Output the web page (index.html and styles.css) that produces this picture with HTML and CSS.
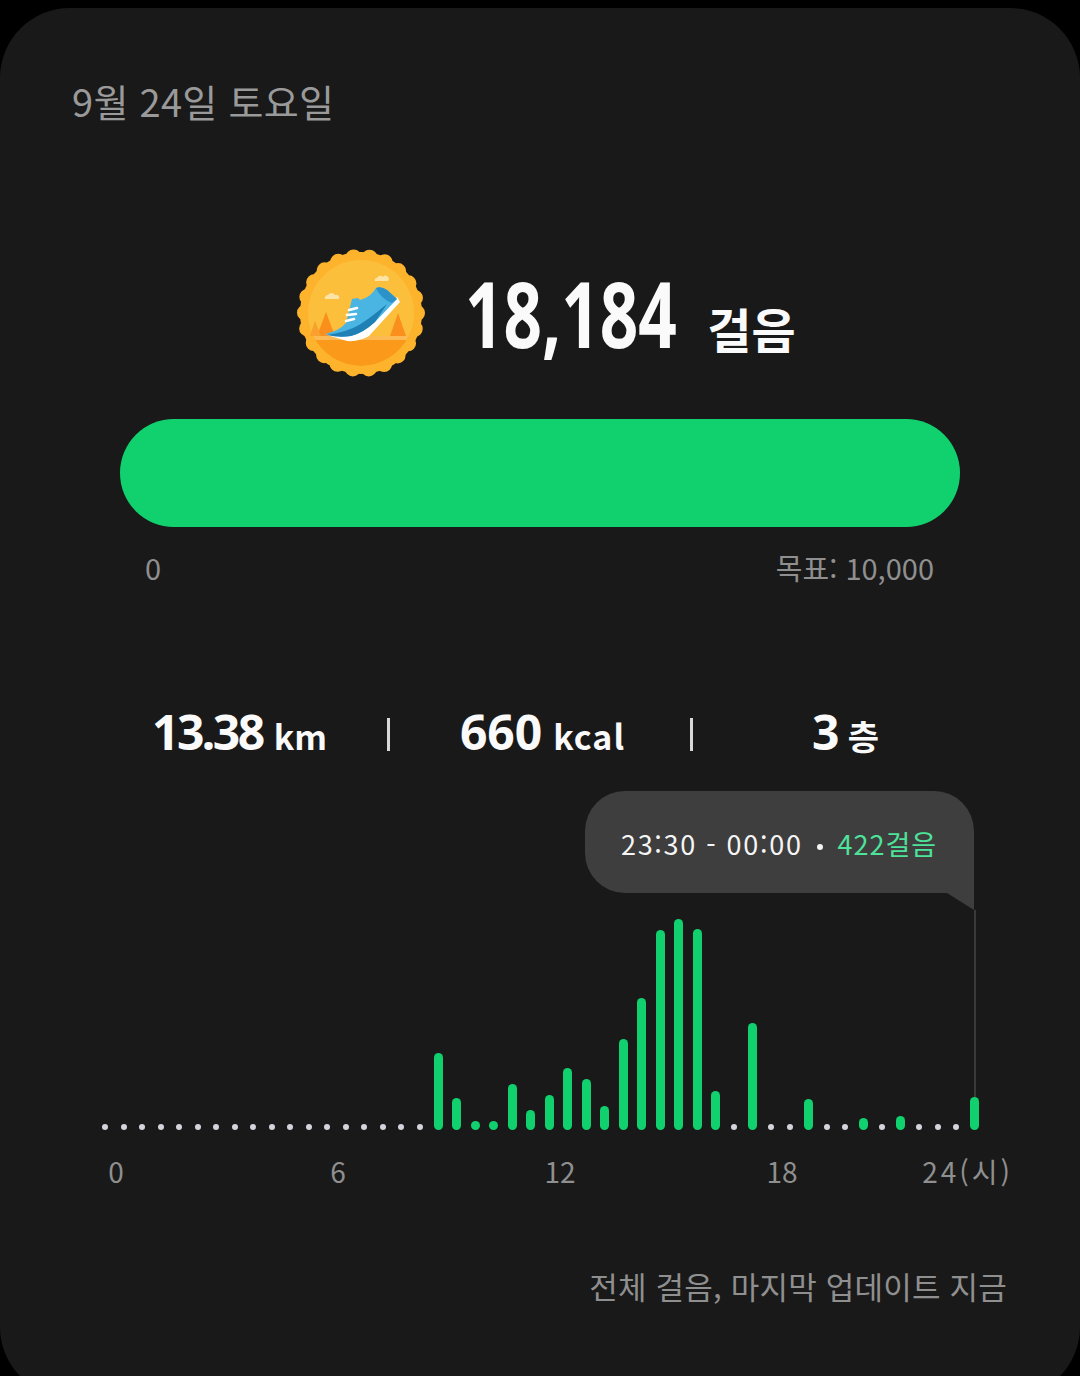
FILE: index.html
```html
<!DOCTYPE html>
<html lang="ko">
    <head>
        <meta charset="UTF-8">
        <meta name="viewport" content="width=device-width, initial-scale=1.0">
        <title>걸음</title>

        <link rel="stylesheet" href="styles.css">
    </head>
    <body>
        <div class="card">

            <div class="date">9월 24일 토요일</div>

            <div class="hero">
                <svg class="badge" viewBox="0 0 128 128">
                    <circle cx="64" cy="64" r="61" fill="#feb32c"/>
                    <circle cx="64" cy="64" r="56" fill="none" stroke="#feb32c" stroke-width="16" stroke-linecap="round" stroke-dasharray="0 16.0"/>
                    <circle cx="64" cy="64" r="53" fill="#fbbf3b"/>
                    <path d="M16.3 87 H111.700 A53 53 0 0 1 16.300 87 Z" fill="#fb9a1a"/>
                    <path d="M16.3 87 H111.700 L109.600 91 H18.400 Z" fill="#fdba52"/>
                    <path d="M29 63 L38 87 H20 Z" fill="#fb8f1e"/>
                    <path d="M18 72 L24 87 H13 Z" fill="#f9a02e"/>
                    <path d="M101 64 L109 87 H93 Z" fill="#fb8f1e"/>
                    <path d="M28 50 a3 3 0 0 1 3 -4 a4 4 0 0 1 7 0 a3 3 0 0 1 4 4 Z" fill="#fde4a6"/>
                    <path d="M78 32 a2 2 0 0 1 2 -3 a3.500 3.500 0 0 1 6 -1 a3 3 0 0 1 5 4 Z" fill="#fde4a6"/>
                    <path d="M27 85 L50 92 Q62 93 72 87 L103 53 L100 48 L66 80 L32 86 Z" fill="#fff"/>
                    <path d="M28 85 Q42 82 49 74 L55 50 L61 49 L63 51 Q74 48 79 39 Q84 37 90 41 L100 50 L78 73 Q66 84 54 87 Q40 89 28 85 Z" fill="#4ab4e2"/>
                    <path d="M79 39 Q84 37 90 41 L100 50 L95 54 Q84 50 79 39 Z" fill="#2c93c9"/>
                    <path d="M30 86 Q50 83 62 76 Q72 70 90 55 L78 73 Q66 84 54 87 Q42 89 30 86 Z" fill="#1f80b6"/>
                    <path d="M52 61 L60 59 M50 66 L59 65 M49 72 L57 70" stroke="#fff" stroke-width="2.600" stroke-linecap="round"/>
                </svg>
                <span class="steps-num">18,184</span>
                <span class="steps-unit">걸음</span>
            </div>

            <div class="progress"></div>
            <div class="progress-labels">
                <span>0</span>
                <span>목표: 10,000</span>
            </div>

            <div class="stats">
                <div class="stat">13.38<small>km</small></div>
                <div class="sep"></div>
                <div class="stat stat-wide">660<small>kcal</small></div>
                <div class="sep"></div>
                <div class="stat">3<small>층</small></div>
            </div>

            <div class="chart">
                <div class="tip">
                    <span class="tip-time">23:30 - 00:00</span>
                    <i class="tip-dot"></i>
                    <span class="tip-steps">422걸음</span>
                </div>
                <div class="tip-line"></div>

                <div class="dot"></div><div class="dot"></div><div class="dot"></div><div class="dot"></div>
                <div class="dot"></div><div class="dot"></div><div class="dot"></div><div class="dot"></div>
                <div class="dot"></div><div class="dot"></div><div class="dot"></div><div class="dot"></div>
                <div class="dot"></div><div class="dot"></div><div class="dot"></div><div class="dot"></div>
                <div class="dot"></div><div class="dot"></div>
                <div class="bar" style="height:77px"></div>
                <div class="bar" style="height:32px"></div>
                <div class="bar" style="height:9px"></div>
                <div class="bar" style="height:9px"></div>
                <div class="bar" style="height:46px"></div>
                <div class="bar" style="height:20px"></div>
                <div class="bar" style="height:35px"></div>
                <div class="bar" style="height:62px"></div>
                <div class="bar" style="height:51px"></div>
                <div class="bar" style="height:24px"></div>
                <div class="bar" style="height:91px"></div>
                <div class="bar" style="height:132px"></div>
                <div class="bar" style="height:200px"></div>
                <div class="bar" style="height:211px"></div>
                <div class="bar" style="height:201px"></div>
                <div class="bar" style="height:39px"></div>
                <div class="dot"></div>
                <div class="bar" style="height:107px"></div>
                <div class="dot"></div><div class="dot"></div>
                <div class="bar" style="height:31px"></div>
                <div class="dot"></div><div class="dot"></div>
                <div class="bar" style="height:12px"></div>
                <div class="dot"></div>
                <div class="bar" style="height:14px"></div>
                <div class="dot"></div><div class="dot"></div><div class="dot"></div>
                <div class="bar" style="height:33px"></div>
            </div>

            <div class="axis">
                <span>0</span>
                <span>6</span>
                <span>12</span>
                <span>18</span>
                <span class="axis-end">24(시)</span>
            </div>

            <div class="updated">전체 걸음, 마지막 업데이트 지금</div>

        </div>
    </body>
</html>
```

FILE: styles.css
```css
html, body{
    margin: 0;
    height: 100%;
    overflow: hidden;
    background-color: #000;
}
body{
    padding-top: 8px;
    box-sizing: border-box;
    font-family: "Noto Sans CJK KR", "Noto Sans", sans-serif;
}
.card{
    height: 1389px;
    border-radius: 70px;
    background-color: #191919;
    overflow: hidden;
}
.date{
    margin: 71px 0 0 72px;
    font-size: 38px;
    line-height: 44px;
    letter-spacing: 0.3px;
    color: #9a9a9a;
}

.hero{
    display: flex;
    align-items: flex-start;
    margin: 126px 0 0 297px;
    height: 128px;
}
.badge{
    width: 128px;
    height: 128px;
    flex: none;
}
.steps-num{
    margin: 0 -77px 0 40px;
    font-family: "Noto Sans", sans-serif;
    font-size: 92px;
    font-weight: bold;
    line-height: 128px;
    color: #fafafa;
    transform: scaleX(0.732);
    transform-origin: left center;
}
.steps-unit{
    margin: 34px 0 0 30px;
    font-size: 48px;
    font-weight: bold;
    line-height: 90px;
    color: #fafafa;
}

.progress{
    margin: 42px 120px 0;
    height: 108px;
    border-radius: 54px;
    background-color: #11d16f;
}
.progress-labels{
    display: flex;
    justify-content: space-between;
    margin: 20px 146px 0 145px;
    font-size: 29px;
    line-height: 40px;
    color: #8f8f8f;
}

.stats{
    display: flex;
    align-items: center;
    margin: 117px 0 0 87px;
    height: 60px;
}
.stat{
    width: 300px;
    box-sizing: border-box;
    padding-left: 5px;
    text-align: center;
    font-family: "Noto Sans", sans-serif;
    font-size: 48px;
    font-weight: bold;
    line-height: 60px;
    letter-spacing: -2.5px;
    color: #fafafa;
}
.stat-wide{
    letter-spacing: 0;
}
.stat small{
    margin-left: 11px;
    font-family: "Noto Sans CJK KR", "Noto Sans", sans-serif;
    font-size: 34px;
    letter-spacing: 0;
}
.stat-wide small{
    letter-spacing: 1px;
}
.sep{
    width: 3px;
    height: 33px;
    background-color: #d8d8d8;
}

.chart{
    position: relative;
    display: flex;
    align-items: flex-end;
    margin: -1px 0 0 100.5px;
    width: 888px;
    height: 367px;
}
.bar, .dot{
    flex: none;
    margin-right: 9.5px;
    border-radius: 5px;
}
.bar{
    width: 9px;
    background-color: #11d16f;
}
.dot{
    width: 6px;
    height: 6px;
    margin-left: 1.5px;
    margin-right: 11px;
    background-color: #d4d4dc;
}
.tip{
    position: absolute;
    top: 28px;
    left: 484.5px;
    width: 389px;
    height: 102px;
    box-sizing: border-box;
    display: flex;
    align-items: center;
    padding: 2px 0 0 36px;
    border-radius: 40px 40px 0 40px;
    background-color: #3e3e3e;
    font-size: 27px;
    color: #f5f5f5;
}
.tip::after{
    content: "";
    position: absolute;
    top: 100%;
    right: 0;
    width: 27px;
    height: 17px;
    background-color: #3e3e3e;
    clip-path: polygon(0 0, 100% 0, 100% 100%);
}
.tip-time{
    letter-spacing: 1.7px;
}
.tip-dot{
    width: 6px;
    height: 6px;
    margin: 8px 15px 0 14px;
    border-radius: 50%;
    background-color: #f5f5f5;
}
.tip-steps{
    letter-spacing: 1px;
    color: #4ee39a;
}
.tip-line{
    position: absolute;
    top: 147px;
    left: 873.5px;
    width: 2px;
    height: 187px;
    background-color: #3a3a3a;
}

.axis{
    display: grid;
    grid-template-columns: repeat(4, 222px) 1fr;
    margin: 21px 67px 0 5px;
    text-align: center;
    font-size: 28px;
    line-height: 40px;
    color: #8f8f8f;
}
.axis-end{
    text-align: right;
    letter-spacing: 3px;
}
.updated{
    margin: 75px 73px 0 0;
    text-align: right;
    font-size: 31px;
    line-height: 40px;
    letter-spacing: 0.2px;
    color: #8f8f8f;
}
```
